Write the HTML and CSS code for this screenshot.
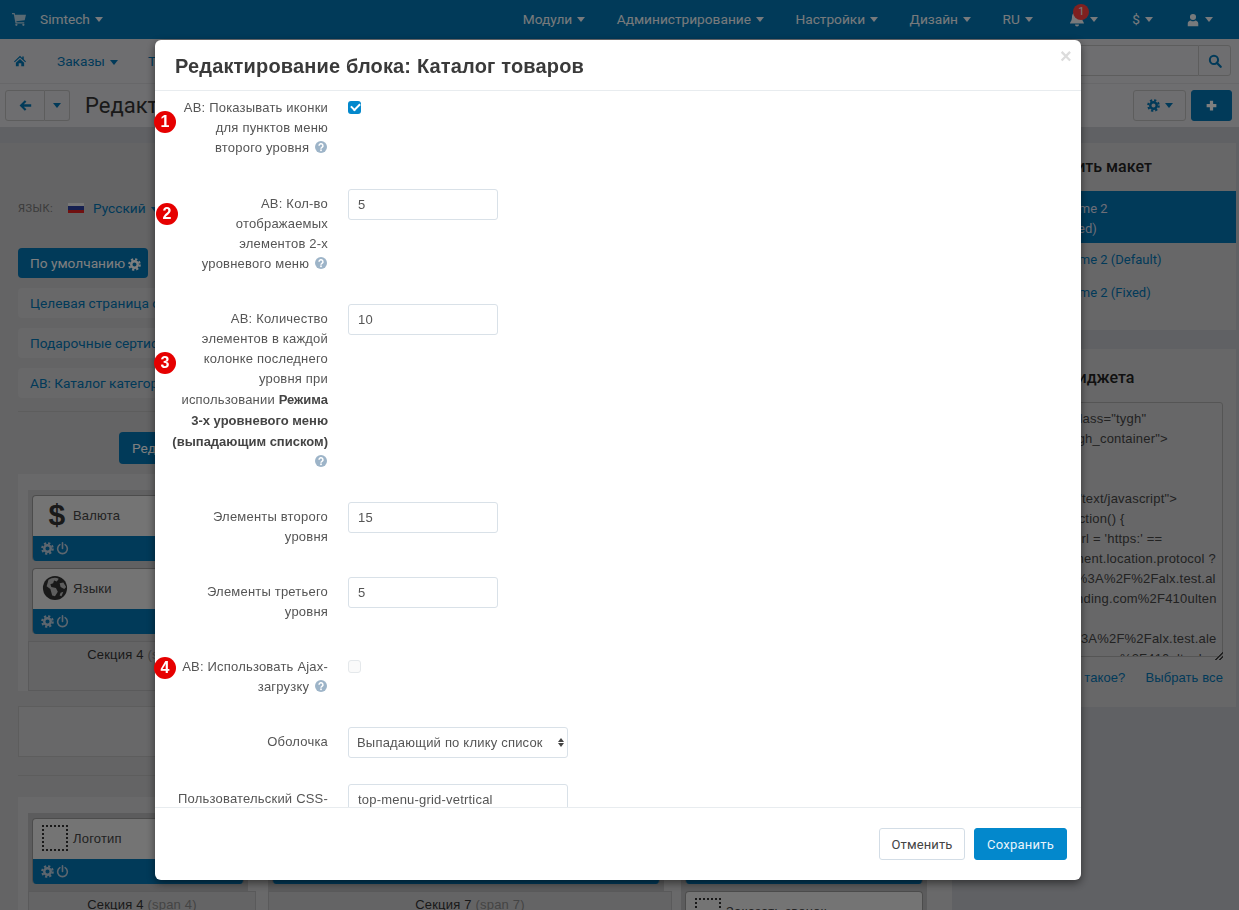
FILE: index.html

```html
<!DOCTYPE html>
<html lang="ru">
<head>
    <meta charset="UTF-8">
    <meta name="viewport" content="width=device-width, initial-scale=1.0">
    <title>Редактирование блока</title>
    <link rel="stylesheet" href="styles.css">
</head>
<body>
    <svg class="sprite" xmlns="http://www.w3.org/2000/svg">
        <symbol id="i-cart" viewBox="0 0 16 16"><path d="M0 1h3l.5 2H16l-1.500 6.500L5 10.500l.3 1.200H14V13H4L2 2.500H0z"/><circle cx="5" cy="14.600" r="1.300"/><circle cx="13" cy="14.600" r="1.300"/></symbol>
        <symbol id="i-home" viewBox="0 0 16 16"><path d="M8 1 0 8.500l1 1.100L8 3.200l7 6.400 1-1.100-3-2.800V2h-2v2zM2.500 10.200V15H6.300v-4h3.400v4h3.800v-4.800L8 5.200z"/></symbol>
        <symbol id="i-back" viewBox="0 0 16 16"><path d="M7.200 1.500.7 8l6.500 6.500 1.900-1.900-3.200-3.200H15V6.600H5.900l3.200-3.200z"/></symbol>
        <symbol id="i-search" viewBox="0 0 16 16"><circle cx="6.800" cy="6.800" r="4.700" fill="none" stroke="currentColor" stroke-width="2.300"/><path d="m10 10 4.500 4.500" stroke="currentColor" stroke-width="2.600" stroke-linecap="round"/></symbol>
        <symbol id="i-plus" viewBox="0 0 16 16"><path d="M6 2h4v4h4v4h-4v4H6v-4H2V6h4z"/></symbol>
        <symbol id="i-bell" viewBox="0 0 16 16"><path d="M8 1C5 1 3 3 3 6c0 4-2 5-2 6.500h14c0-1.500-2-2.500-2-6.500 0-3-2-5-5-5zM6 13.500a2 2 0 0 0 4 0z"/></symbol>
        <symbol id="i-user" viewBox="0 0 16 16"><circle cx="8" cy="4.500" r="3.500"/><path d="M2 15v-3c0-2 1.500-3.500 3.500-3.500.7.600 1.500 1 2.500 1s1.800-.4 2.500-1c2 0 3.500 1.500 3.500 3.500v3z"/></symbol>
        <symbol id="i-cog" viewBox="0 0 16 16"><circle cx="8" cy="8" r="4" fill="none" stroke="currentColor" stroke-width="3"/><circle cx="8" cy="8" r="6.500" fill="none" stroke="currentColor" stroke-width="2.600" stroke-dasharray="2.700 2.405"/></symbol>
        <symbol id="i-power" viewBox="0 0 16 16"><path d="M4.800 3.300a6 6 0 1 0 6.400 0M8 1v7" fill="none" stroke="currentColor" stroke-width="2" stroke-linecap="round"/></symbol>
        <symbol id="i-help" viewBox="0 0 16 16"><circle cx="8" cy="8" r="8"/><path d="M5.400 6.200a2.600 2.600 0 1 1 3.900 2.200c-.9.500-1.300 1-1.300 1.800" fill="none" stroke="#fff" stroke-width="2"/><rect x="6.900" y="11.300" width="2.200" height="2.200" fill="#fff"/></symbol>
        <symbol id="i-globe" viewBox="0 0 28 28"><circle cx="14" cy="14" r="13"/><path fill="#bcbcbc" d="M7 5c3-2 8-3 11-1l-2 3-3-1-1 3-3 1 1 3 5 1 2 4-3 5-3-1-2-7-4-3zM19 9l4-1 3 5-2 2-4-2zM20 19l3-1-2 5-2-1z"/></symbol>
    </svg>

    <div class="page">
        <header class="topbar">
            <div class="brand">
                <svg class="ic ic-cart"><use href="#i-cart"/></svg>
                <span class="caret-item">Simtech</span>
            </div>
            <nav class="topmenu">
                <span class="caret-item">Модули</span>
                <span class="caret-item">Администрирование</span>
                <span class="caret-item">Настройки</span>
                <span class="caret-item">Дизайн</span>
                <span class="caret-item">RU</span>
                <span class="caret-item item-bell"><svg class="ic ic-bell"><use href="#i-bell"/></svg><b class="bell-count">1</b></span>
                <span class="caret-item">$</span>
                <span class="caret-item item-user"><svg class="ic ic-user"><use href="#i-user"/></svg></span>
            </nav>
        </header>

        <div class="navbar">
            <svg class="ic ic-home"><use href="#i-home"/></svg>
            <span class="caret-item link">Заказы</span>
            <span class="caret-item link">Товары</span>
            <form class="search">
                <input class="search-input" type="text">
                <span class="search-btn"><svg class="ic ic-search"><use href="#i-search"/></svg></span>
            </form>
        </div>

        <div class="toolbar">
            <div class="btn-group">
                <span class="tool-btn back-btn"><svg class="ic ic-back"><use href="#i-back"/></svg></span>
                <span class="tool-btn back-more"><i class="caret"></i></span>
            </div>
            <h2 class="page-title">Редактирование макетов</h2>
            <span class="tool-btn gear-btn"><svg class="ic ic-gear"><use href="#i-cog"/></svg><i class="caret"></i></span>
            <span class="tool-btn add-btn"><svg class="ic ic-plus"><use href="#i-plus"/></svg></span>
        </div>

        <div class="main">
            <section class="content">
                <div class="lang-row">
                    <span class="lang-label">ЯЗЫК:</span>
                    <span class="flag"></span>
                    <span class="caret-item link">Русский</span>
                </div>
                <div class="tab-active">По умолчанию <svg class="ic ic-tabcog"><use href="#i-cog"/></svg></div>
                <div class="tab">Целевая страница с товарами</div>
                <div class="tab">Подарочные сертификаты</div>
                <div class="tab">АВ: Каталог категорий товаров</div>
                <hr class="rule">
                <div class="edit-btn">Редактировать</div>

                <div class="band band-first">
                    <div class="cell cell-s">
                        <div class="block">
                            <div class="block-head"><span class="block-dollar">$</span>Валюта</div>
                            <div class="block-foot"><svg class="ic"><use href="#i-cog"/></svg><svg class="ic"><use href="#i-power"/></svg></div>
                        </div>
                        <div class="block">
                            <div class="block-head"><svg class="ic ic-globe"><use href="#i-globe"/></svg>Языки</div>
                            <div class="block-foot"><svg class="ic"><use href="#i-cog"/></svg><svg class="ic"><use href="#i-power"/></svg></div>
                        </div>
                        <div class="cell-name">Секция 4 <small>(span 4)</small></div>
                    </div>
                </div>
                <div class="empty-box"></div>
                <hr class="rule rule-low">

                <div class="band">
                    <div class="cell cell-s">
                        <div class="block">
                            <div class="block-head"><span class="logo-box"></span>Логотип</div>
                            <div class="block-foot"><svg class="ic"><use href="#i-cog"/></svg><svg class="ic"><use href="#i-power"/></svg></div>
                        </div>
                        <div class="cell-name">Секция 4 <small>(span 4)</small></div>
                    </div>
                    <div class="cell cell-m">
                        <div class="block">
                            <div class="block-head">Поиск</div>
                            <div class="block-foot"></div>
                        </div>
                        <div class="cell-name">Секция 7 <small>(span 7)</small></div>
                    </div>
                    <div class="cell cell-l">
                        <div class="block">
                            <div class="block-head">Корзина</div>
                            <div class="block-foot"></div>
                        </div>
                        <div class="block">
                            <div class="block-head"><span class="logo-box"></span>Заказать звонок</div>
                        </div>
                    </div>
                </div>
            </section>

            <aside class="sidebar">
                <div class="panel panel-layouts">
                    <h3 class="panel-title">Изменить макет</h3>
                    <div class="layout-item layout-active">Theme 2<br>(Fixed)</div>
                    <div class="layout-item">Theme 2 (Default)</div>
                    <div class="layout-item">Theme 2 (Fixed)</div>
                </div>
                <div class="panel panel-code">
                    <h3 class="panel-title">Код виджета</h3>
                    <pre class="code-box">&lt;div class="tygh"
id="tygh_container"&gt;


type="text/javascript"&gt;
   (function() {
  var url = 'https:' ==
document.location.protocol ?
'https%3A%2F%2Falx.test.al
alexanding.com%2F410ulten

'http%3A%2F%2Falx.test.ale
xanding.com%2F410ultenk</pre>
                    <div class="code-links"><span>Что такое?</span><span>Выбрать все</span></div>
                </div>
            </aside>
        </div>
    </div>

    <div class="backdrop"></div>

    <div class="modal">
        <div class="modal-head">
            <h3 class="modal-title">Редактирование блока: Каталог товаров</h3>
            <span class="modal-close">×</span>
        </div>
        <div class="modal-body">
            <div class="row row-first">
                <label class="row-label">АВ: Показывать иконки для пунктов меню второго уровня <svg class="help"><use href="#i-help"/></svg></label>
                <input class="check" type="checkbox" checked>
            </div>
            <div class="row">
                <label class="row-label">АВ: Кол-во отображаемых элементов 2-х уровневого меню <svg class="help"><use href="#i-help"/></svg></label>
                <input class="field" type="text" value="5">
            </div>
            <div class="row">
                <label class="row-label">АВ: Количество элементов в каждой колонке последнего уровня при использовании <b>Режима 3-х уровневого меню (выпадающим списком)</b> <svg class="help"><use href="#i-help"/></svg></label>
                <input class="field" type="text" value="10">
            </div>
            <div class="row">
                <label class="row-label">Элементы второго уровня</label>
                <input class="field" type="text" value="15">
            </div>
            <div class="row">
                <label class="row-label">Элементы третьего уровня</label>
                <input class="field" type="text" value="5">
            </div>
            <div class="row">
                <label class="row-label">АВ: Использовать Ajax-загрузку <svg class="help"><use href="#i-help"/></svg></label>
                <input class="check check-off" type="checkbox">
            </div>
            <div class="row">
                <label class="row-label">Оболочка</label>
                <div class="select-wrap">
                    <select class="field field-wide">
                        <option>Выпадающий по клику список</option>
                    </select>
                </div>
            </div>
            <div class="row">
                <label class="row-label">Пользовательский CSS-класс</label>
                <input class="field field-wide" type="text" value="top-menu-grid-vetrtical">
            </div>
        </div>
        <div class="modal-foot">
            <button class="btn-cancel" type="button">Отменить</button>
            <button class="btn-save" type="button">Сохранить</button>
        </div>
        <span class="mark mark-1">1</span>
        <span class="mark mark-2">2</span>
        <span class="mark mark-3">3</span>
        <span class="mark mark-4">4</span>
    </div>
</body>
</html>
```

FILE: styles.css

```css
* { box-sizing: border-box; }
html, body { margin: 0; height: 910px; overflow: hidden; }
body { font-family: Roboto, "Liberation Sans", sans-serif; font-size: 13.7px; color: #444; background: #c0c2c8; }
.sprite { display: none; }
.ic { width: 16px; height: 16px; fill: currentColor; display: inline-block; vertical-align: middle; }
.page { width: 1239px; height: 910px; overflow: hidden; }

.caret-item::after, .caret { content: ""; display: inline-block; border-left: 4.5px solid transparent; border-right: 4.5px solid transparent; border-top: 5px solid currentColor; vertical-align: middle; margin-left: 5px; }
.link { color: #0274b3; }

.topbar { height: 39px; background: #0274b3; color: #f0f4f8; display: flex; align-items: center; padding: 0 0 2px 12px; }
.brand { display: flex; align-items: center; }
.ic-cart { width: 14px; height: 14px; margin-right: 14px; opacity: .75; }
.topmenu { margin-left: auto; display: flex; align-items: center; padding-right: 26px; gap: 31.5px; }
.item-bell { position: relative; margin: 0 2.5px 0 5px; }
.bell-count { position: absolute; left: 4px; top: -6px; width: 16px; height: 16px; border-radius: 50%; background: #ff4040; font-size: 11px; font-weight: 400; line-height: 16px; text-align: center; }
.item-user { margin-left: 1.5px; }
.ic-user { width: 14px; height: 14px; }

.navbar { height: 45px; background: #dcdce0; border-bottom: 1px solid #cfcfd3; display: flex; align-items: center; padding: 0 8px 0 14px; }
.ic-home { width: 12px; height: 12px; color: #0274b3; margin-right: 31px; }
.navbar .caret-item { margin-right: 30px; }
.search { margin-left: auto; display: flex; margin-top: -1px; }
.search-input { width: 170px; height: 31px; border: 1px solid #bbb; border-right: 0; border-radius: 3px 0 0 3px; background: #dcdce0; }
.search-btn { width: 33px; height: 31px; border: 1px solid #bbb; border-radius: 0 3px 3px 0; display: flex; align-items: center; justify-content: center; color: #0274b3; }
.ic-search { width: 14px; height: 14px; }

.toolbar { height: 43px; background: #dcdce0; display: flex; align-items: center; padding: 0 7px 0 5px; }
.btn-group { display: flex; }
.tool-btn { height: 31px; border: 1px solid #bbb; border-radius: 3px; display: flex; align-items: center; justify-content: center; color: #0274b3; }
.back-btn { width: 40px; border-radius: 3px 0 0 3px; }
.back-more { width: 25px; border-left: 0; border-radius: 0 3px 3px 0; }
.back-more .caret { margin: 0; }
.ic-back { width: 13px; height: 13px; }
.page-title { font-size: 22px; font-weight: 400; color: #333; margin: 0 0 0 15px; }
.gear-btn { width: 53px; margin-left: auto; }
.ic-gear { width: 13px; height: 13px; }
.add-btn { width: 41px; margin-left: 5px; background: #0274b3; border-color: #0274b3; color: #fff; }
.ic-plus { width: 13px; height: 13px; }

.main { display: flex; justify-content: space-between; margin-top: 16px; padding-right: 3px; }
.content { width: 952px; flex: none; padding: 1px 0 0 18px; height: 770px; background: #c8c8ca; }
.lang-row { display: flex; align-items: center; height: 20px; margin-top: 54px; }
.lang-label { font-size: 11px; letter-spacing: .5px; color: #777; width: 50px; }
.flag { width: 16px; height: 10px; margin-right: 9px; background: linear-gradient(#eee 33%, #2a3fa0 33%, #2a3fa0 66%, #e02020 66%); }

.tab-active { width: 130px; height: 30px; margin-top: 30px; background: #0274b3; color: #fff; border-radius: 4px; line-height: 30px; padding-left: 12px; }
.ic-tabcog { width: 13px; height: 13px; }
.tab { width: 340px; height: 30px; margin-top: 10px; background: #d0d0d2; color: #0274b3; border-radius: 4px; line-height: 30px; padding-left: 12px; white-space: nowrap; }
.rule { width: 400px; margin: 13px 0 0; border: 0; border-top: 1px solid #bbb; }
.rule-low { margin-top: 18px; }
.edit-btn { width: 150px; height: 32px; margin: 20px 0 0 101px; background: #0274b3; color: #fff; border-radius: 4px; line-height: 32px; padding-left: 13px; }

.band { margin-top: 21px; padding: 16px 10px 0; display: flex; width: 934px; background: #d2d2d4; }
.band-first { margin-top: 10px; }
.cell { padding: 5px 4px 0; background: #b8b8ba; flex: none; }
.cell-s { width: 220px; }
.cell-m { width: 396px; margin-left: 20px; }
.cell-l { width: 246px; margin-left: 17px; }
.block { border: 1px solid #999; border-bottom: 0; border-radius: 4px; overflow: hidden; background: #e8e8e8; margin-bottom: 7px; }
.block-head { height: 40px; display: flex; align-items: center; padding: 0 0 2px 8px; font-family: "Liberation Sans", sans-serif; font-size: 13px; letter-spacing: .2px; color: #444; white-space: nowrap; }
.block-dollar { width: 32px; text-align: center; font-size: 30px; font-weight: 700; color: #333; }
.ic-globe { width: 26px; height: 26px; margin: 0 5px 0 1px; color: #333; }
.logo-box { width: 26px; height: 26px; border: 2px dotted #333; margin: 0 5px 0 1px; flex: none; }
.block-foot { height: 25px; background: #0274b3; color: #bcd; display: flex; align-items: center; gap: 2px; padding-left: 8px; }
.block-foot .ic { width: 13px; height: 13px; }
.cell-name { margin: 7px -12px 0 -4px; height: 50px; padding-top: 5px; background: #c9c9cb; border: 1px solid #b4b4b6; text-align: center; font-family: "Liberation Sans", sans-serif; font-size: 13px; letter-spacing: .2px; color: #333; }
.cell-name small { font-size: 13px; color: #888; }
.band-first .cell { background: #c2c2c4; }
.empty-box { width: 400px; height: 51px; margin-top: 15px; background: #d0d0d2; border: 1px solid #bbb; }

.sidebar { width: 214px; flex: none; }
.panel { background: #cfcfd1; margin-bottom: 19px; overflow: hidden; }
.panel-layouts { height: 187px; }
.panel-code { height: 358px; padding: 0 13px 0 14px; position: relative; }
.panel-title { font-size: 16px; font-weight: 500; color: #222; margin: 14px 5px 14px; line-height: 20px; }
.panel-code .panel-title { margin: 19px 0 14px; }
.layout-item { padding: 7px 0 6px 35px; font-size: 13px; line-height: 20px; color: #0274b3; height: 33px; }
.layout-active { height: 52px; padding-top: 8px; background: #0274b3; color: #dde; }
.code-box { margin: 0; height: 255px; overflow: hidden; border: 1px solid #aaa; border-radius: 3px; padding: 6px 0 0 7px; font-family: "Liberation Sans", sans-serif; font-size: 13px; line-height: 20px; letter-spacing: .2px; color: #444; }
.panel-code::after { content: ""; position: absolute; left: 193px; top: 303px; width: 8px; height: 8px; background: linear-gradient(135deg, transparent 50%, #444 50%, #444 60%, transparent 60%, transparent 75%, #444 75%, #444 85%, transparent 85%); }
.code-links { display: flex; justify-content: flex-end; gap: 20px; margin-top: 13px; color: #0274b3; font-family: "Liberation Sans", sans-serif; font-size: 13px; letter-spacing: .1px; }

.backdrop { position: fixed; inset: 0; background: rgba(0, 0, 0, .5); }

.modal { position: fixed; left: 155px; top: 40px; width: 926px; height: 840px; background: #fff; border-radius: 6px; box-shadow: 0 3px 9px rgba(0, 0, 0, .5); display: flex; flex-direction: column; font-family: "Liberation Sans", sans-serif; font-size: 13px; letter-spacing: .2px; color: #555; }
.modal-head { height: 51px; flex: none; border-bottom: 1px solid #e8ecef; display: flex; align-items: center; padding: 2px 10px 0 20px; position: relative; }
.modal-title { font-size: 20px; font-weight: 700; letter-spacing: .16px; color: #3a3a3a; margin: 0; }
.modal-close { position: absolute; right: 9px; top: 6px; font-size: 20px; font-weight: 700; line-height: 20px; color: #dcdcdc; }
.modal-body { flex: 1; min-height: 0; overflow: hidden; padding-top: 2px; }
.modal-foot { height: 73px; flex: none; border-top: 1px solid #e8ecef; display: flex; justify-content: flex-end; align-items: flex-start; gap: 9px; padding: 20px 14px 0 0; }

.row { display: flex; align-items: flex-start; margin-bottom: 25px; }
.row-first { margin-bottom: 26px; }
.row-label { width: 158px; padding: 5px 0; text-align: right; line-height: 20px; flex: none; margin: 0 20px 0 15px; }
.row-label b { color: #444; letter-spacing: 0; line-height: 21px; }
.row-label .help { margin-top: -1px; }
.help { width: 12px; height: 12px; fill: #9db4c8; vertical-align: -1px; margin: 0 1px 0 2px; }

.field { width: 150px; height: 31px; border: 1px solid #d9e1e8; border-radius: 3px; padding: 0 9px; font: 13px "Liberation Sans", sans-serif; letter-spacing: .2px; color: #555; background: #fff; outline: none; }
.field-wide { width: 220px; }
.select-wrap { position: relative; width: 220px; height: 32px; }
.select-wrap select { appearance: none; padding: 0 8px; }
.select-wrap::before, .select-wrap::after { content: ""; position: absolute; right: 4px; border-left: 3px solid transparent; border-right: 3px solid transparent; }
.select-wrap::before { top: 11px; border-bottom: 4px solid #444; }
.select-wrap::after { top: 16px; border-top: 4px solid #444; }

.check { appearance: none; width: 13px; height: 13px; margin: 8px 0 0; background: #0388cc; border-radius: 3px; position: relative; }
.check::after { content: ""; position: absolute; left: 3px; top: 2px; width: 7px; height: 4px; border-left: 2px solid #fff; border-bottom: 2px solid #fff; transform: rotate(-45deg); }
.check-off { background: #fafafa; border: 1px solid #e4e8eb; }
.check-off::after { display: none; }

.btn-cancel, .btn-save { height: 32px; border-radius: 3px; font: 13px Roboto, sans-serif; letter-spacing: .1px; padding: 0; }
.btn-cancel { width: 86px; background: #fff; border: 1px solid #d3dde6; color: #444; }
.btn-save { width: 93px; background: #0388cc; border: 1px solid #0388cc; color: #e8f4fb; letter-spacing: .25px; }

.mark { position: absolute; left: -1px; width: 22px; height: 22px; border-radius: 50%; background: #e60000; color: #fff; font-size: 16px; font-weight: 700; line-height: 22px; text-align: center; letter-spacing: 0; }
.mark-1 { top: 71px; }
.mark-2 { top: 163px; left: 1px; }
.mark-3 { top: 312px; }
.mark-4 { top: 617px; }
```
